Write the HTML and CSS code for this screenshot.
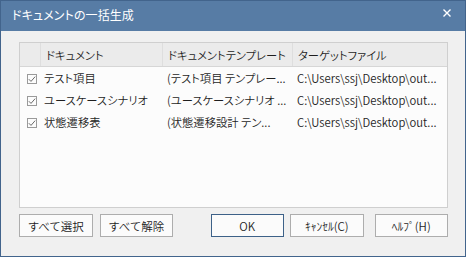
FILE: index.html
```html
<!DOCTYPE html>
<html lang="ja">
<head>
<meta charset="utf-8">
<link rel="stylesheet" href="styles.css">
</head>
<body>
<div class="window">
  <div class="titlebar">
    <span class="title">ドキュメントの一括生成</span>
    <svg class="close" width="8" height="8" viewBox="0 0 8 8"><path d="M0.5 0.5 L7.5 7.5 M7.5 0.5 L0.5 7.5" stroke="#fff" stroke-width="1.4"/></svg>
  </div>
  <div class="content">
    <div class="list">
      <div class="row header">
        <div class="cell c0"></div>
        <div class="cell c1">ドキュメント</div>
        <div class="cell c2">ドキュメントテンプレート</div>
        <div class="cell c3">ターゲットファイル</div>
      </div>
      <div class="row">
        <div class="cell c0"><span class="check"><svg width="8" height="8" viewBox="0 0 8 8"><path d="M0.8 4.2 L3 6.4 L7.2 1.6" fill="none" stroke="#6a6a6a" stroke-width="1"/></svg></span></div>
        <div class="cell c1">テスト項目</div>
        <div class="cell c2">(テスト項目 テンプレー...</div>
        <div class="cell c3">C:\Users\ssj\Desktop\out...</div>
      </div>
      <div class="row">
        <div class="cell c0"><span class="check"><svg width="8" height="8" viewBox="0 0 8 8"><path d="M0.8 4.2 L3 6.4 L7.2 1.6" fill="none" stroke="#6a6a6a" stroke-width="1"/></svg></span></div>
        <div class="cell c1">ユースケースシナリオ</div>
        <div class="cell c2">(ユースケースシナリオ ...</div>
        <div class="cell c3">C:\Users\ssj\Desktop\out...</div>
      </div>
      <div class="row">
        <div class="cell c0"><span class="check"><svg width="8" height="8" viewBox="0 0 8 8"><path d="M0.8 4.2 L3 6.4 L7.2 1.6" fill="none" stroke="#6a6a6a" stroke-width="1"/></svg></span></div>
        <div class="cell c1">状態遷移表</div>
        <div class="cell c2">(状態遷移設計 テン...</div>
        <div class="cell c3">C:\Users\ssj\Desktop\out...</div>
      </div>
    </div>
    <div class="buttons">
      <button class="btn">すべて選択</button>
      <button class="btn">すべて解除</button>
      <span class="spacer"></span>
      <button class="btn default">OK</button>
      <button class="btn">ｷｬﾝｾﾙ(C)</button>
      <button class="btn">ﾍﾙﾌﾟ(H)</button>
    </div>
  </div>
</div>
</body>
</html>
```
FILE: styles.css
```css
* { box-sizing: border-box; }
html, body { margin: 0; padding: 0; }
body {
  font-family: "Noto Sans CJK JP", "Noto Sans", sans-serif;
  font-size: 11.3px;
  font-weight: 350;
  font-feature-settings: "palt";
  color: #1e1e1e;
  background: #ffffff;
}
.window {
  width: 466px;
  height: 257px;
  border: 1px solid #42648c;
  background: #f0f0f0;
  display: flex;
  flex-direction: column;
}
.titlebar {
  height: 30px;
  background: #577ca5;
  display: flex;
  align-items: center;
  padding: 0 14px 4px 11px;
  color: #fff;
}
.title {
  flex: 1;
  font-size: 12px;
  font-weight: 400;
  letter-spacing: 0.1px;
}
.close { margin-top: -3px; }
.content {
  flex: 1;
  padding: 11px 17px 0 18px;
  display: flex;
  flex-direction: column;
}
.list {
  height: 166px;
  border: 1px solid #cfcfcf;
  background: #fcfcfc;
}
.row {
  display: flex;
  height: 22px;
  align-items: center;
}
.row.header {
  height: 24px;
  background: #ebebeb;
  border-bottom: 1px solid #d6d6d6;
}
.cell {
  white-space: nowrap;
  overflow: hidden;
  height: 100%;
  display: flex;
  align-items: center;
}
.c0 { width: 20px; padding-left: 7px; }
.c1 { width: 122px; padding-left: 4px; }
.c2 { width: 130px; padding-left: 5px; }
.c3 { flex: 1; padding-left: 5px; }
.header .c1, .header .c2, .header .c3 {
  border-left: 1px solid #dedede;
  padding-left: 5px;
}
.check {
  width: 10px;
  height: 10px;
  border: 1px solid #9a9a9a;
  background: #fcfcfc;
  display: flex;
  align-items: center;
  justify-content: center;
  margin-top: 2px;
}
.buttons {
  display: flex;
  margin-top: 6px;
  gap: 7px;
}
.spacer { width: 24px; }
.btn {
  width: 75px;
  height: 23px;
  border: 1px solid #adadad;
  background: #fbfbfb;
  font-family: inherit;
  font-size: 11.5px;
  font-weight: 350;
  color: #1e1e1e;
  padding: 0;
}
.btn.palt { font-feature-settings: "palt"; }
.btn.default {
  border: 1px solid #3d6188;
}
.buttons .btn:nth-child(5) { margin-left: -1px; }
.buttons .btn:nth-child(6) { margin-left: 4px; }
```
